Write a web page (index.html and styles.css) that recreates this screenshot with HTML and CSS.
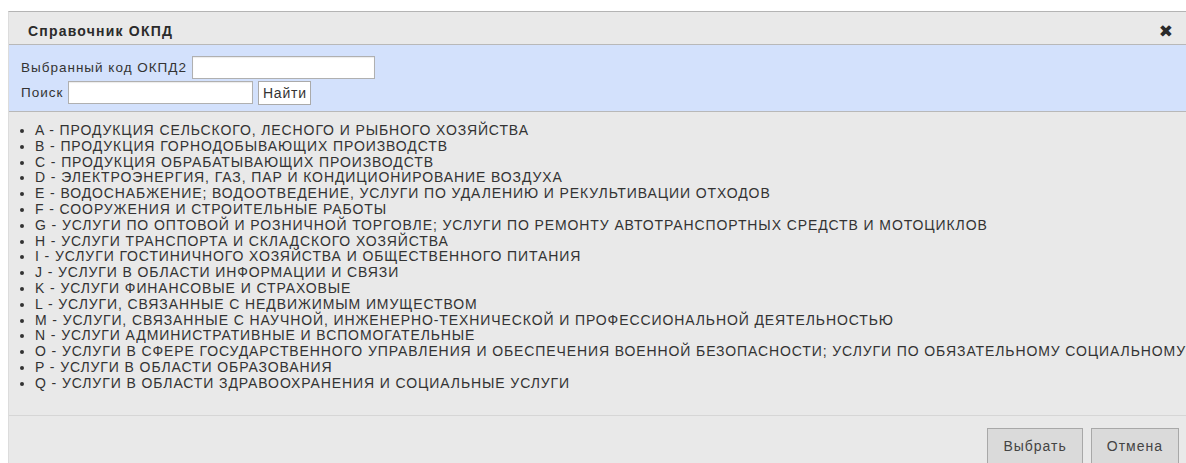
FILE: index.html
```html
<!DOCTYPE html>
<html lang="ru">
<head>
<meta charset="utf-8">
<title>Справочник ОКПД</title>
<link rel="stylesheet" href="styles.css">
</head>
<body>
<div class="dialog">
  <div class="dialog-header">
    <span class="dialog-title">Справочник ОКПД</span>
    <span class="dialog-close">&#10006;</span>
  </div>
  <div class="filter">
    <div class="filter-row">
      <label>Выбранный код ОКПД2</label>
      <input type="text" class="field field-code">
    </div>
    <div class="filter-row">
      <label>Поиск</label>
      <input type="text" class="field field-search">
      <button class="find-btn">Найти</button>
    </div>
  </div>
  <div class="tree">
    <ul>
      <li>A - ПРОДУКЦИЯ СЕЛЬСКОГО, ЛЕСНОГО И РЫБНОГО ХОЗЯЙСТВА</li>
      <li>B - ПРОДУКЦИЯ ГОРНОДОБЫВАЮЩИХ ПРОИЗВОДСТВ</li>
      <li>C - ПРОДУКЦИЯ ОБРАБАТЫВАЮЩИХ ПРОИЗВОДСТВ</li>
      <li>D - ЭЛЕКТРОЭНЕРГИЯ, ГАЗ, ПАР И КОНДИЦИОНИРОВАНИЕ ВОЗДУХА</li>
      <li>E - ВОДОСНАБЖЕНИЕ; ВОДООТВЕДЕНИЕ, УСЛУГИ ПО УДАЛЕНИЮ И РЕКУЛЬТИВАЦИИ ОТХОДОВ</li>
      <li>F - СООРУЖЕНИЯ И СТРОИТЕЛЬНЫЕ РАБОТЫ</li>
      <li>G - УСЛУГИ ПО ОПТОВОЙ И РОЗНИЧНОЙ ТОРГОВЛЕ; УСЛУГИ ПО РЕМОНТУ АВТОТРАНСПОРТНЫХ СРЕДСТВ И МОТОЦИКЛОВ</li>
      <li>H - УСЛУГИ ТРАНСПОРТА И СКЛАДСКОГО ХОЗЯЙСТВА</li>
      <li>I - УСЛУГИ ГОСТИНИЧНОГО ХОЗЯЙСТВА И ОБЩЕСТВЕННОГО ПИТАНИЯ</li>
      <li>J - УСЛУГИ В ОБЛАСТИ ИНФОРМАЦИИ И СВЯЗИ</li>
      <li>K - УСЛУГИ ФИНАНСОВЫЕ И СТРАХОВЫЕ</li>
      <li>L - УСЛУГИ, СВЯЗАННЫЕ С НЕДВИЖИМЫМ ИМУЩЕСТВОМ</li>
      <li>M - УСЛУГИ, СВЯЗАННЫЕ С НАУЧНОЙ, ИНЖЕНЕРНО-ТЕХНИЧЕСКОЙ И ПРОФЕССИОНАЛЬНОЙ ДЕЯТЕЛЬНОСТЬЮ</li>
      <li>N - УСЛУГИ АДМИНИСТРАТИВНЫЕ И ВСПОМОГАТЕЛЬНЫЕ</li>
      <li>O - УСЛУГИ В СФЕРЕ ГОСУДАРСТВЕННОГО УПРАВЛЕНИЯ И ОБЕСПЕЧЕНИЯ ВОЕННОЙ БЕЗОПАСНОСТИ; УСЛУГИ ПО ОБЯЗАТЕЛЬНОМУ СОЦИАЛЬНОМУ ОБЕСПЕЧЕНИЮ</li>
      <li>P - УСЛУГИ В ОБЛАСТИ ОБРАЗОВАНИЯ</li>
      <li>Q - УСЛУГИ В ОБЛАСТИ ЗДРАВООХРАНЕНИЯ И СОЦИАЛЬНЫЕ УСЛУГИ</li>
    </ul>
  </div>
  <div class="dialog-footer">
    <button class="btn">Выбрать</button>
    <button class="btn">Отмена</button>
  </div>
</div>
</body>
</html>
```
FILE: styles.css
```css
html, body {
  margin: 0;
  padding: 0;
  background: #fff;
  overflow: hidden;
}

body {
  font-family: "Liberation Sans", Arial, sans-serif;
  color: #333;
}

.dialog {
  margin: 11px 0 0 8px;
  width: 1180px;
  background: #e9e9e9;
  border-top: 1px solid #b4b4b4;
  border-left: 1px solid #dcdcdc;
}

.dialog-header {
  height: 33px;
  box-sizing: border-box;
  display: flex;
  align-items: center;
  justify-content: space-between;
  padding: 5px 16px 0 19px;
  border-bottom: 1px solid #b8b8b8;
}

.dialog-title {
  font-size: 14px;
  font-weight: bold;
  letter-spacing: 1.2px;
  color: #2b2b2b;
}

.dialog-close {
  font-size: 17px;
  color: #2a2a2a;
  font-family: "DejaVu Sans", sans-serif;
}

.filter {
  background: #d3e1fc;
  height: 67px;
  box-sizing: border-box;
  padding: 10px 12px 0;
  border-bottom: 1px solid #b8b8b8;
}

.filter-row {
  display: flex;
  align-items: center;
  height: 25px;
  font-size: 13.5px;
  letter-spacing: 1px;
}

.filter-row label {
  margin-right: 5px;
}

.field {
  box-sizing: border-box;
  height: 23px;
  border: 1px solid #b0b0b0;
  background: #fff;
  margin: 0;
  padding: 0 3px;
  box-shadow: inset 0 1px 1px rgba(0, 0, 0, 0.08);
}

.field-code {
  width: 183px;
}

.field-search {
  width: 185px;
}

.find-btn {
  margin-left: 5px;
  width: 53px;
  height: 24px;
  box-sizing: border-box;
  border: 1px solid #aaa;
  background: #fff;
  font-family: "Liberation Sans", Arial, sans-serif;
  font-size: 14px;
  letter-spacing: 0.8px;
  color: #333;
  padding: 0;
}

.tree {
  height: 303px;
  border-bottom: 1px solid #d6d6d6;
  overflow: hidden;
}

.tree ul {
  margin: 11px 0 0;
  padding-left: 26px;
  font-size: 14px;
  letter-spacing: 0.9px;
  line-height: 15.8px;
  white-space: nowrap;
}

.dialog-footer {
  display: flex;
  justify-content: flex-end;
  gap: 8px;
  padding: 12px 10px 0;
  height: 60px;
}

.btn {
  height: 36px;
  box-sizing: border-box;
  padding: 0 15px;
  border: 1px solid #a8a8a8;
  background: #dadada;
  font-family: "Liberation Sans", Arial, sans-serif;
  font-size: 14px;
  letter-spacing: 1px;
  color: #444;
}
```
